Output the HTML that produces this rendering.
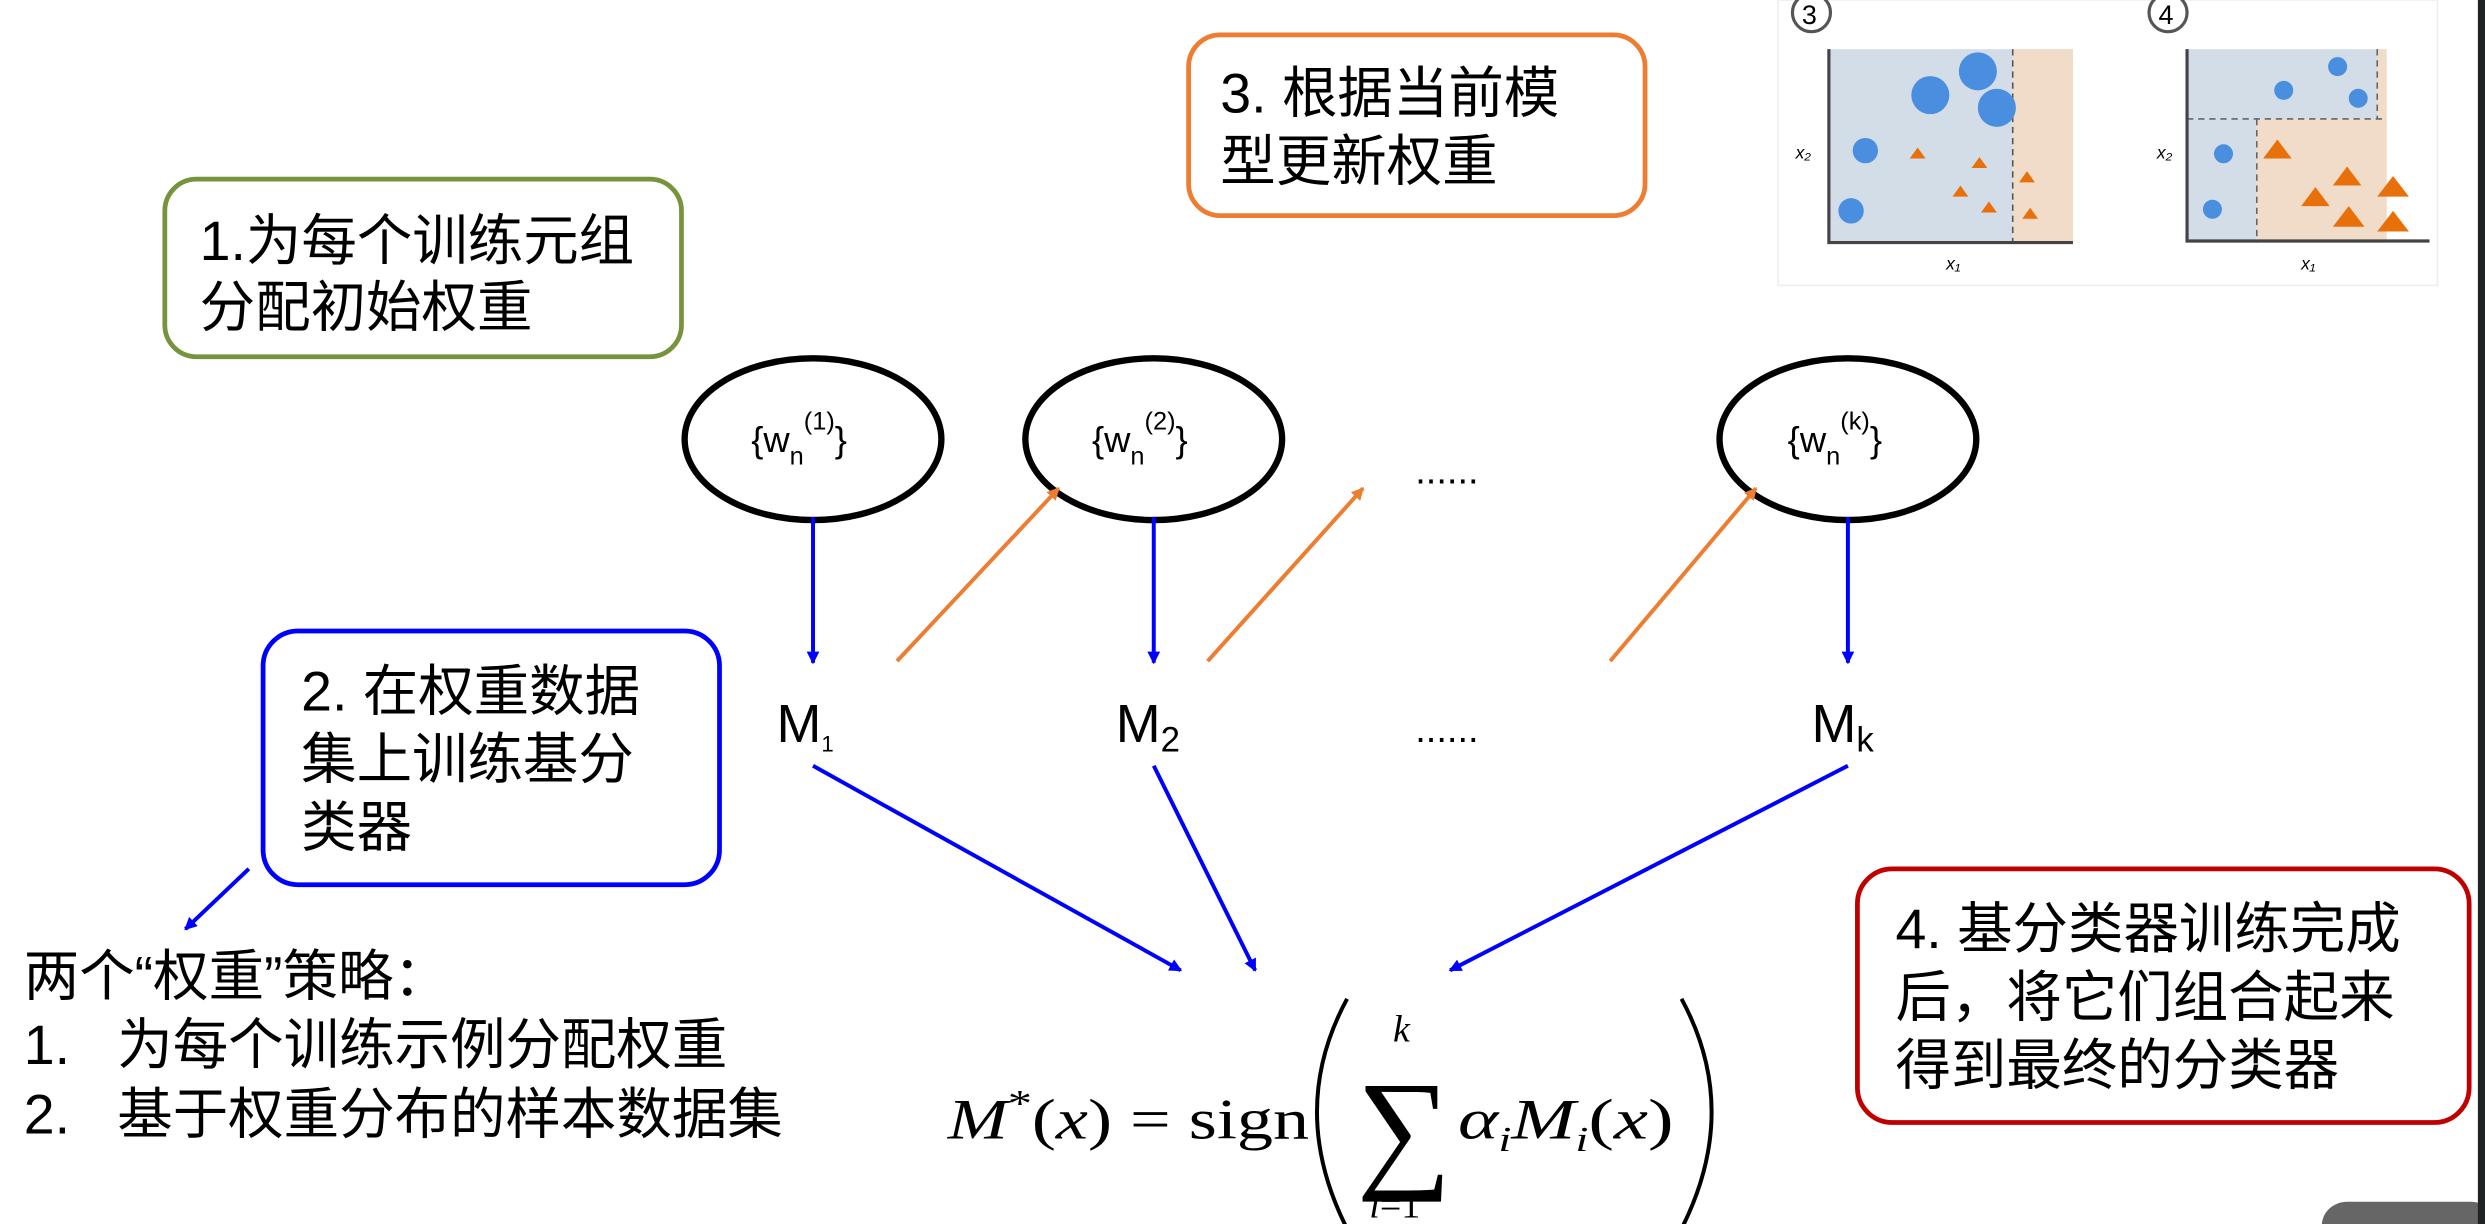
<!DOCTYPE html>
<html><head><meta charset="utf-8"><style>
html,body{margin:0;padding:0;background:#fff;overflow:hidden}
svg{display:block}
text{font-family:"Liberation Sans","Noto Sans CJK SC",sans-serif;fill:#000}
.cjk{font-size:35px}
.lst{font-size:35px}
.m{font-family:"Liberation Serif","DejaVu Serif",serif}
</style></head><body>
<svg width="2485" height="1224" viewBox="0 0 1568 772" preserveAspectRatio="none" xmlns="http://www.w3.org/2000/svg">
<defs>
<marker id="ab" markerWidth="8" markerHeight="8" refX="7" refY="4" orient="auto" markerUnits="userSpaceOnUse" viewBox="0 0 8 8"><path d="M0,0 L8,4 L0,8 Z" fill="#0000ff"/></marker>
<marker id="ao" markerWidth="8" markerHeight="8" refX="7" refY="4" orient="auto" markerUnits="userSpaceOnUse" viewBox="0 0 8 8"><path d="M0,0 L8,4 L0,8 Z" fill="#ed7d31"/></marker>
</defs>
<rect width="1568" height="772" fill="#fff"/>
<g>
<rect x="1122" y="0" width="416" height="180" fill="#fff" stroke="#eee"/>
<circle cx="1143" cy="8" r="12" fill="#fff" stroke="#555" stroke-width="2"/><text x="1137" y="15" font-size="17">3</text>
<circle cx="1368" cy="8" r="12" fill="#fff" stroke="#555" stroke-width="2"/><text x="1362" y="15" font-size="17">4</text>
<rect x="1154" y="31" width="116" height="122" fill="#d3dde8"/>
<rect x="1270" y="31" width="38" height="122" fill="#f0dcc8"/>
<line x1="1270" y1="31" x2="1270" y2="153" stroke="#555" stroke-dasharray="4,3"/>
<path d="M1154,31 V153 H1308" fill="none" stroke="#444" stroke-width="2"/>
<circle cx="1218" cy="60" r="12" fill="#4a8ee0"/><circle cx="1248" cy="45" r="12" fill="#4a8ee0"/><circle cx="1260" cy="68" r="12" fill="#4a8ee0"/>
<circle cx="1177" cy="95" r="8" fill="#4a8ee0"/><circle cx="1168" cy="133" r="8" fill="#4a8ee0"/>
<g fill="#e8700a"><path d="M1205,100 l5,-7 5,7z"/><path d="M1244,106 l5,-7 5,7z"/><path d="M1232,124 l5,-7 5,7z"/><path d="M1250,134 l5,-7 5,7z"/><path d="M1274,115 l5,-7 5,7z"/><path d="M1276,138 l5,-7 5,7z"/></g>
<text x="1133" y="100" font-size="11" font-style="italic">x₂</text><text x="1228" y="170" font-size="11" font-style="italic">x₁</text>
<rect x="1380" y="31" width="125" height="44" fill="#d3dde8"/>
<rect x="1500" y="31" width="6" height="44" fill="#f0dcc8"/>
<rect x="1380" y="75" width="44" height="78" fill="#d3dde8"/>
<rect x="1424" y="75" width="82" height="78" fill="#f0dcc8"/>
<line x1="1380" y1="75" x2="1505" y2="75" stroke="#666" stroke-dasharray="4,3"/>
<line x1="1500" y1="31" x2="1500" y2="75" stroke="#666" stroke-dasharray="4,3"/>
<line x1="1424" y1="75" x2="1424" y2="153" stroke="#666" stroke-dasharray="4,3"/>
<path d="M1380,31 V152 H1533" fill="none" stroke="#444" stroke-width="2"/>
<circle cx="1441" cy="57" r="6" fill="#4a8ee0"/><circle cx="1475" cy="42" r="6" fill="#4a8ee0"/><circle cx="1488" cy="62" r="6" fill="#4a8ee0"/>
<circle cx="1403" cy="97" r="6" fill="#4a8ee0"/><circle cx="1396" cy="132" r="6" fill="#4a8ee0"/>
<g fill="#e8700a"><path d="M1428,100 l9,-12 9,12z"/><path d="M1472,117 l9,-12 9,12z"/><path d="M1500,124 l10,-13 10,13z"/><path d="M1452,130 l9,-12 9,12z"/><path d="M1472,143 l10,-13 10,13z"/><path d="M1500,146 l10,-13 10,13z"/></g>
<text x="1361" y="100" font-size="11" font-style="italic">x₂</text><text x="1452" y="170" font-size="11" font-style="italic">x₁</text>
</g>
<rect x="104" y="113" width="326" height="112" rx="20" fill="none" stroke="#77933c" stroke-width="3"/>
<text class="cjk" x="126" y="164">1.为每个训练元组</text><text class="cjk" x="126" y="206">分配初始权重</text>
<rect x="750" y="22" width="288" height="114" rx="20" fill="none" stroke="#ed7d31" stroke-width="3"/>
<text class="cjk" x="770" y="71">3. 根据当前模</text><text class="cjk" x="770" y="114">型更新权重</text>
<rect x="166" y="398" width="288" height="160" rx="22" fill="none" stroke="#0000ff" stroke-width="3"/>
<text class="cjk" x="190" y="448">2. 在权重数据</text><text class="cjk" x="190" y="491">集上训练基分</text><text class="cjk" x="190" y="534">类器</text>
<rect x="1172" y="548" width="386" height="160" rx="22" fill="none" stroke="#c00000" stroke-width="3"/>
<text class="cjk" x="1196" y="598">4. 基分类器训练完成</text><text class="cjk" x="1196" y="641">后，将它们组合起来</text><text class="cjk" x="1196" y="684">得到最终的分类器</text>
<g fill="#fff" stroke="#000" stroke-width="4">
<ellipse cx="513" cy="277" rx="81" ry="51"/><ellipse cx="728" cy="277" rx="81" ry="51"/><ellipse cx="1166" cy="277" rx="81" ry="51"/>
</g>
<g font-size="23">
<text x="474" y="285">{w<tspan font-size="16" dy="8">n</tspan><tspan font-size="16" dy="-22">(1)</tspan><tspan dy="14">}</tspan></text>
<text x="689" y="285">{w<tspan font-size="16" dy="8">n</tspan><tspan font-size="16" dy="-22">(2)</tspan><tspan dy="14">}</tspan></text>
<text x="1128" y="285">{w<tspan font-size="16" dy="8">n</tspan><tspan font-size="16" dy="-22">(k)</tspan><tspan dy="14">}</tspan></text>
</g>
<text x="893" y="305" font-size="24">......</text>
<text x="893" y="468" font-size="24">......</text>
<text x="490" y="468" font-size="34">M<tspan font-size="14" dy="6">1</tspan></text>
<text x="704" y="468" font-size="34">M<tspan font-size="22" dy="6">2</tspan></text>
<text x="1143" y="468" font-size="34">M<tspan font-size="22" dy="6">k</tspan></text>
<g stroke="#0000ff" stroke-width="2.5" fill="none" marker-end="url(#ab)">
<line x1="513" y1="326" x2="513" y2="418"/><line x1="728" y1="326" x2="728" y2="418"/><line x1="1166" y1="326" x2="1166" y2="418"/>
<line x1="513" y1="483" x2="745" y2="612"/><line x1="728" y1="483" x2="792" y2="612"/><line x1="1166" y1="483" x2="915" y2="612"/>
<line x1="157" y1="548" x2="117" y2="586"/>
</g>
<g stroke="#ed7d31" stroke-width="2.5" fill="none" marker-end="url(#ao)">
<line x1="566" y1="417" x2="668" y2="308"/><line x1="762" y1="417" x2="860" y2="308"/><line x1="1016" y1="417" x2="1108" y2="308"/>
</g>
<text class="lst" x="15" y="628">两个“权重”策略：</text>
<text class="lst" x="15" y="671">1.</text><text class="lst" x="74" y="671">为每个训练示例分配权重</text>
<text class="lst" x="15" y="715">2.</text><text class="lst" x="74" y="715">基于权重分布的样本数据集</text>
<text x="598" y="718" font-size="36" class="m" textLength="228" lengthAdjust="spacingAndGlyphs"><tspan font-style="italic">M</tspan><tspan font-size="24" dy="-14">*</tspan><tspan dy="14">(</tspan><tspan font-style="italic">x</tspan>) = sign</text>
<text x="856" y="740" font-size="84" class="m">∑</text>
<text x="879" y="657" font-size="24" font-style="italic" class="m">k</text>
<text x="864" y="768" font-size="24" class="m"><tspan font-style="italic">i</tspan>=1</text>
<text x="920" y="718" font-size="36" class="m" font-style="italic" textLength="136" lengthAdjust="spacingAndGlyphs">α<tspan font-size="22" dy="8">i</tspan><tspan dy="-8">M</tspan><tspan font-size="22" dy="8">i</tspan><tspan dy="-8" font-style="normal">(</tspan>x<tspan font-style="normal">)</tspan></text>
<path d="M850,630 Q812,700 850,775" fill="none" stroke="#000" stroke-width="2.5"/>
<path d="M1061,630 Q1099,700 1061,775" fill="none" stroke="#000" stroke-width="2.5"/>
<rect x="1465" y="758" width="110" height="30" rx="16" fill="#666"/>
<rect x="1563.5" y="0" width="5" height="772" fill="#202324"/>
</svg>
</body></html>
